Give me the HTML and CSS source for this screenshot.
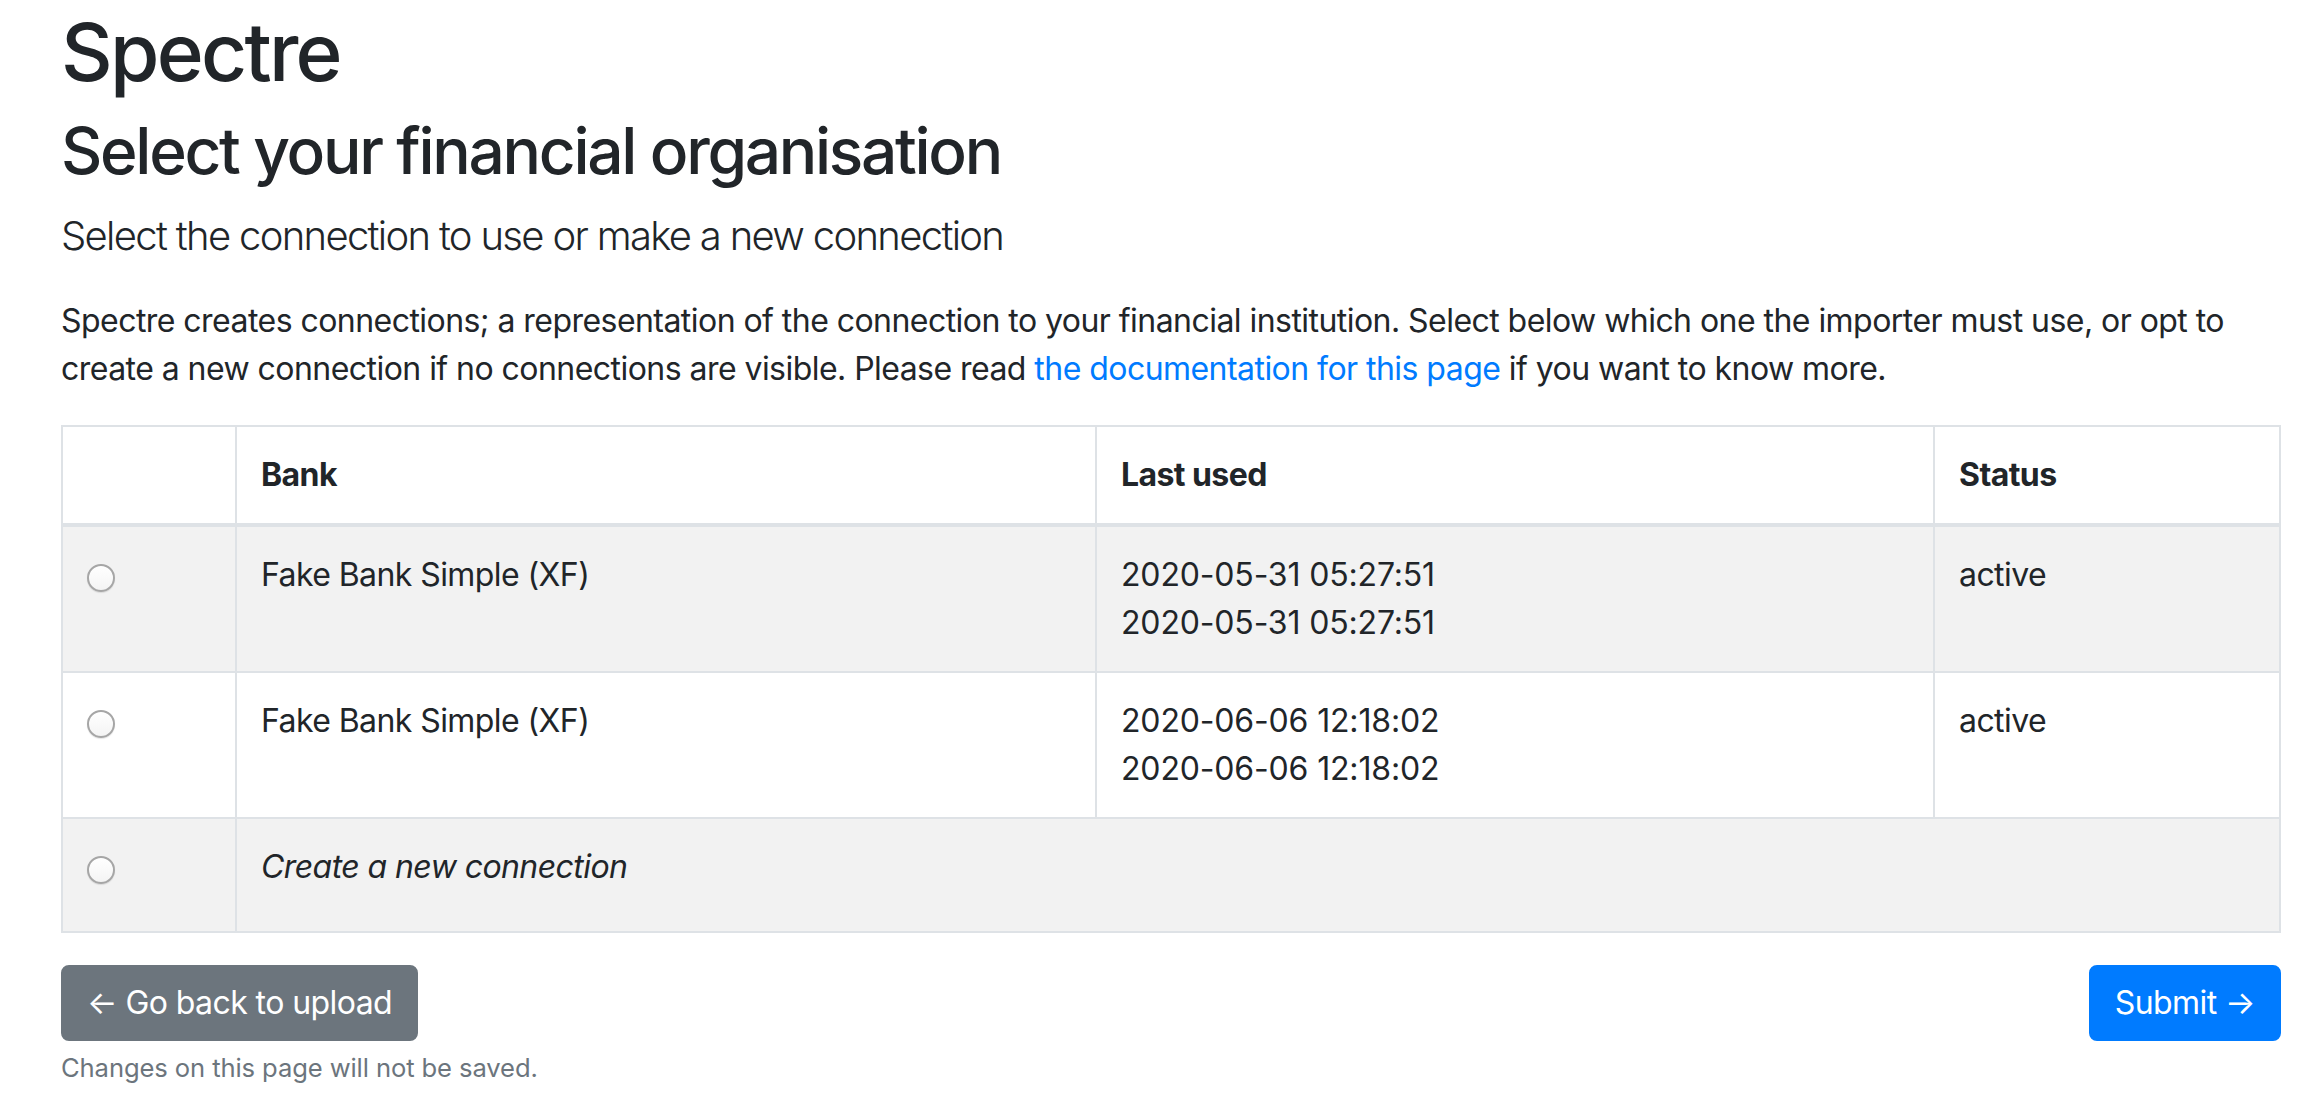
FILE: index.html
```html
<!DOCTYPE html>
<html lang="en">
<head>
<meta charset="utf-8">
<title>Spectre – Select your financial organisation</title>
<link rel="stylesheet" href="styles.css">
</head>
<body>
<div class="container">
  <h1 class="title">Spectre</h1>
  <h2 class="subtitle">Select your financial organisation</h2>
  <p class="lead">Select the connection to use or make a new connection</p>
  <p class="intro">Spectre creates connections; a representation of the connection to your financial institution. Select below which one the importer must use, or opt to create a new connection if no connections are visible. Please read <a href="#" class="link">the documentation for this page</a> if you want to know more.</p>

  <form class="conn-form">
    <table class="conn-table">
      <colgroup>
        <col class="c-radio">
        <col class="c-bank">
        <col class="c-used">
        <col class="c-status">
      </colgroup>
      <thead>
        <tr>
          <th></th>
          <th>Bank</th>
          <th>Last used</th>
          <th>Status</th>
        </tr>
      </thead>
      <tbody>
        <tr class="striped">
          <td><input type="radio" name="connection" class="radio"></td>
          <td>Fake Bank Simple (XF)</td>
          <td class="dates">2020-05-31 05:27:51<br>2020-05-31 05:27:51</td>
          <td>active</td>
        </tr>
        <tr>
          <td><input type="radio" name="connection" class="radio"></td>
          <td>Fake Bank Simple (XF)</td>
          <td class="dates">2020-06-06 12:18:02<br>2020-06-06 12:18:02</td>
          <td>active</td>
        </tr>
        <tr class="striped new-row">
          <td><input type="radio" name="connection" class="radio"></td>
          <td colspan="3"><em>Create a new connection</em></td>
        </tr>
      </tbody>
    </table>

    <div class="actions">
      <div class="back-group">
        <a href="#" class="btn btn-secondary">&larr; Go back to upload</a>
        <small class="form-text">Changes on this page will not be saved.</small>
      </div>
      <button type="submit" class="btn btn-primary">Submit &rarr;</button>
    </div>
  </form>
</div>
</body>
</html>
```

FILE: styles.css
```css
html, body {
  margin: 0;
  padding: 0;
  background: #ffffff;
}

body {
  font-family: Inter, "Noto Sans", "Liberation Sans", sans-serif;
  font-size: 32px;
  line-height: 48px;
  letter-spacing: -0.018em;
  color: #212529;
}

.container {
  padding: 4px 41px 0 61px;
}

.title {
  margin: 0 0 13px 0;
  font-size: 80px;
  line-height: 96px;
  font-weight: 500;
  letter-spacing: -0.034em;
}

.subtitle {
  margin: 0 0 16px 0;
  font-size: 64px;
  line-height: 76.8px;
  font-weight: 500;
  letter-spacing: -0.036em;
}

.lead {
  margin: 0 0 31px 0;
  font-size: 40px;
  line-height: 60px;
  font-weight: 300;
  letter-spacing: -0.042em;
}

.intro {
  margin: 0 0 32px 0;
  letter-spacing: -0.017em;
}

.link {
  color: #007bff;
  text-decoration: none;
}

.conn-form {
  margin: 0;
}

.conn-table {
  width: 2220px;
  table-layout: fixed;
  border-collapse: collapse;
  border: 2px solid #dee2e6;
  margin-bottom: 32px;
}

.c-radio { width: 174px; }
.c-bank { width: 860px; }
.c-used { width: 838px; }
.c-status { width: 346px; }

.conn-table th,
.conn-table td {
  border: 2px solid #dee2e6;
  padding: 24px;
  text-align: left;
  vertical-align: top;
}

.conn-table th {
  font-weight: 700;
  border-bottom-width: 4px;
}

.conn-table .dates {
  letter-spacing: -0.005em;
}

.conn-table .striped td {
  background: #f2f2f2;
}

.conn-table .new-row td {
  padding-bottom: 40px;
}

.conn-table em {
  font-style: italic;
}

.radio {
  -webkit-appearance: none;
  appearance: none;
  display: block;
  width: 28px;
  height: 28px;
  margin: 13px 0 0 0;
  border-radius: 50%;
  border: 2px solid #a6a6a6;
  background: linear-gradient(#ffffff, #f4f4f4);
  box-shadow: 0 1px 1px rgba(0, 0, 0, 0.1);
  box-sizing: border-box;
}

.actions {
  display: flex;
  justify-content: space-between;
  align-items: flex-start;
}

.back-group {
  display: flex;
  flex-direction: column;
  align-items: flex-start;
}

.btn {
  display: inline-block;
  font-family: inherit;
  font-size: 32px;
  line-height: 48px;
  font-weight: 400;
  letter-spacing: -0.018em;
  padding: 12px 24px;
  border: 2px solid transparent;
  border-radius: 8px;
  text-decoration: none;
  cursor: pointer;
}

.btn-secondary {
  color: #ffffff;
  background: #6c757d;
  border-color: #6c757d;
}

.btn-primary {
  color: #ffffff;
  background: #007bff;
  border-color: #007bff;
}

.form-text {
  display: block;
  margin-top: 8px;
  font-size: 25.6px;
  line-height: 38.4px;
  letter-spacing: -0.004em;
  color: #6c757d;
}
```
